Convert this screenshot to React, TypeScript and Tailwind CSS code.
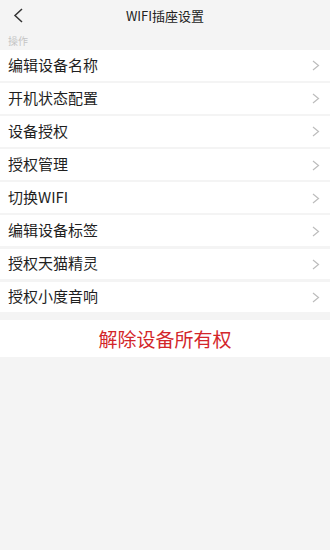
import React from 'react';

const items = [
  '编辑设备名称',
  '开机状态配置',
  '设备授权',
  '授权管理',
  '切换WIFI',
  '编辑设备标签',
  '授权天猫精灵',
  '授权小度音响',
];

const Chevron = () => (
  <svg width="8" height="11" viewBox="0 0 8 11" className="shrink-0 mt-[3px]">
    <path d="M1 1l5.5 4.5L1 10" fill="none" stroke="#bdbdbd" strokeWidth="1.2" />
  </svg>
);

export default function App() {
  return (
    <div
      className="w-[330px] h-[550px] bg-[#f4f4f4] flex flex-col"
      style={{ fontFamily: '"Noto Sans CJK SC", "Noto Sans", sans-serif' }}
    >
      {/* Header */}
      <div className="relative h-[32px] flex items-center justify-center pb-[2px]">
        <button className="absolute left-[13px] top-[8px]">
          <svg width="11" height="15" viewBox="0 0 11 15">
            <path d="M9 1L2 7.5L9 14" fill="none" stroke="#333" strokeWidth="1.5" />
          </svg>
        </button>
        <h1 className="text-[13px] text-[#222] leading-none">WIFI插座设置</h1>
      </div>

      <div className="h-[18px] px-[8px] flex items-center text-[10px] text-[#c4c4c4] leading-none">操作</div>

      <div className="flex flex-col gap-[2.6px]">
        {items.map((label) => (
          <div key={label} className="h-[30.5px] bg-white flex items-center justify-between pl-[8px] pr-[10px] pb-[2px]">
            <span className="text-[15px] text-[#1f1f1f] leading-none">{label}</span>
            <Chevron />
          </div>
        ))}
      </div>

      <button className="mt-[8px] h-[37px] bg-white flex items-center justify-center text-[19px] text-[#d3262a] leading-none">
        解除设备所有权
      </button>
    </div>
  );
}
